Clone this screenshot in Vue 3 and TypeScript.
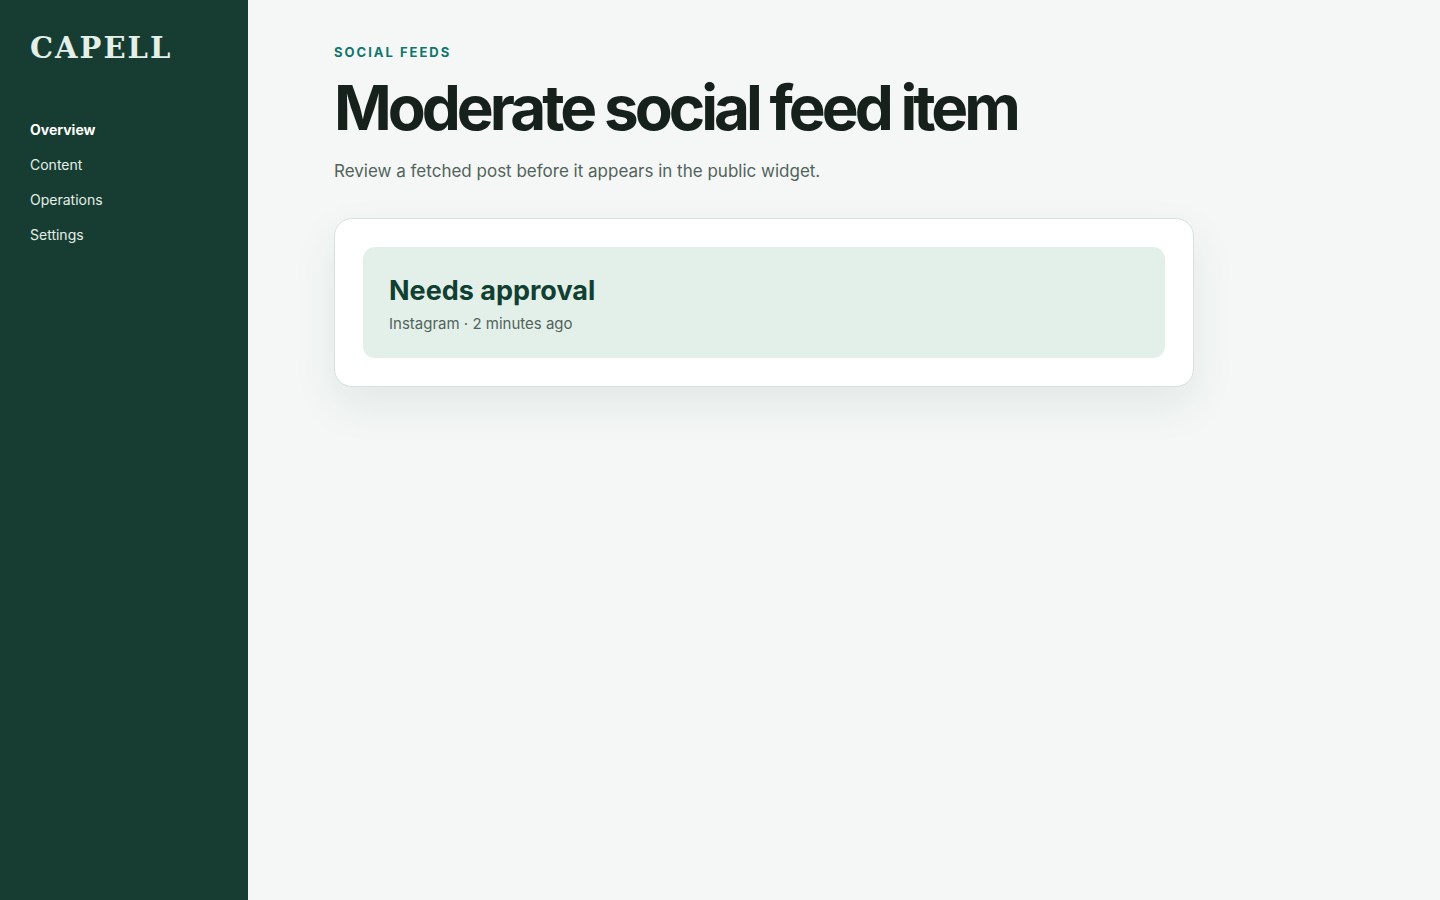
<script setup lang="ts">
interface NavItem {
  label: string
  href: string
  current?: boolean
}

const navItems: NavItem[] = [
  { label: 'Overview', href: '#overview', current: true },
  { label: 'Content', href: '#content' },
  { label: 'Operations', href: '#operations' },
  { label: 'Settings', href: '#settings' },
]
</script>

<template>
  <div class="layout">
    <aside class="sidebar">
      <div class="brand">CAPELL</div>
      <nav class="nav" aria-label="Main">
        <a
          v-for="item in navItems"
          :key="item.label"
          :href="item.href"
          :class="['nav-link', { active: item.current }]"
          :aria-current="item.current ? 'page' : undefined"
        >{{ item.label }}</a>
      </nav>
    </aside>
    <main class="main">
      <p class="eyebrow">Social Feeds</p>
      <h1 class="title">Moderate social feed item</h1>
      <p class="lead">Review a fetched post before it appears in the public widget.</p>
      <section class="card">
        <div class="status">
          <h2 class="status-title">Needs approval</h2>
          <p class="status-meta">Instagram · 2 minutes ago</p>
        </div>
      </section>
    </main>
  </div>
</template>

<style>
body {
  margin: 0;
  background: #f4f7f6;
}
</style>

<style scoped>
.layout {
  display: grid;
  grid-template-columns: 248px 1fr;
  min-height: 100vh;
  font-family: Inter, "Liberation Sans", sans-serif;
  color: #17211c;
}

.sidebar {
  box-sizing: border-box;
  padding: 30px;
  background: #173d32;
}

.brand {
  margin-bottom: 55px;
  font-family: "DejaVu Serif", "Liberation Serif", serif;
  font-size: 29px;
  font-weight: 700;
  line-height: 36px;
  letter-spacing: 2px;
  color: #e3f0e9;
}

.nav {
  display: grid;
  gap: 18px;
}

.nav-link {
  font-size: 14px;
  line-height: 17px;
  color: #e3f0e9;
  text-decoration: none;
}

.nav-link.active {
  font-weight: 700;
  color: #ffffff;
}

.main {
  box-sizing: border-box;
  width: 100%;
  max-width: 1032px;
  padding: 44px 86px;
}

.eyebrow {
  margin: 0;
  font-size: 13px;
  font-weight: 700;
  line-height: 16px;
  letter-spacing: 2px;
  text-transform: uppercase;
  color: #0f766e;
}

.title {
  margin: 16px 0 18px;
  font-size: 62px;
  font-weight: 700;
  line-height: 64px;
  letter-spacing: -4px;
}

.lead {
  margin: 0;
  font-size: 17px;
  line-height: 26px;
  color: #52635b;
}

.card {
  margin-top: 34px;
  padding: 28px;
  border: 1px solid #d5e2dd;
  border-radius: 18px;
  background: #ffffff;
  box-shadow: 0 18px 45px rgba(23, 61, 50, 0.08);
}

.status {
  padding: 26px;
  border-radius: 12px;
  background: #e3f0e9;
}

.status-title {
  margin: 0 0 7px;
  font-size: 27px;
  font-weight: 700;
  line-height: 36px;
  color: #113f31;
}

.status-meta {
  margin: 0;
  font-size: 15px;
  line-height: 16px;
  color: #52635b;
}
</style>
